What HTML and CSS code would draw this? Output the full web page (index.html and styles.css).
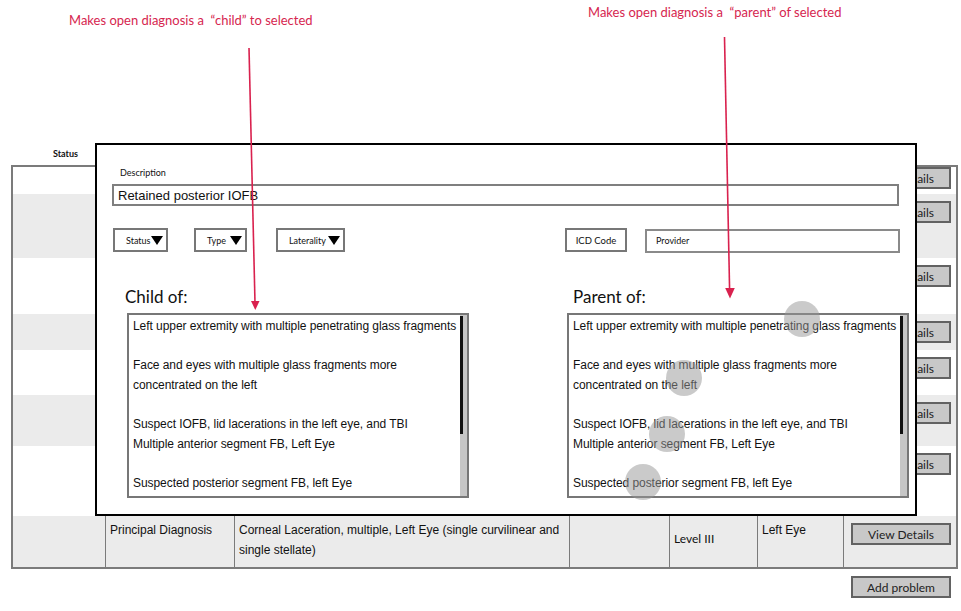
FILE: index.html
```html
<!DOCTYPE html>
<html lang="en">
<head>
    <meta charset="UTF-8">
    <meta name="viewport" content="width=device-width, initial-scale=1.0">
    <title>Problem List - Edit Diagnosis</title>
    <link rel="stylesheet" href="styles.css">
</head>
<body>
    <div class="board">
        <div class="col-label">Status</div>
        <div class="problems">
            <div class="row">
                <div class="cell"></div><div class="cell"></div><div class="cell"></div><div class="cell"></div><div class="cell"></div><div class="cell"></div>
                <div class="cell cell-action"><button class="btn">View Details</button></div>
            </div>
            <div class="row row-alt">
                <div class="cell"></div><div class="cell"></div><div class="cell"></div><div class="cell"></div><div class="cell"></div><div class="cell"></div>
                <div class="cell cell-action"><button class="btn">View Details</button></div>
            </div>
            <div class="row">
                <div class="cell"></div><div class="cell"></div><div class="cell"></div><div class="cell"></div><div class="cell"></div><div class="cell"></div>
                <div class="cell cell-action"><button class="btn">View Details</button></div>
            </div>
            <div class="row row-alt">
                <div class="cell"></div><div class="cell"></div><div class="cell"></div><div class="cell"></div><div class="cell"></div><div class="cell"></div>
                <div class="cell cell-action"><button class="btn">View Details</button></div>
            </div>
            <div class="row">
                <div class="cell"></div><div class="cell"></div><div class="cell"></div><div class="cell"></div><div class="cell"></div><div class="cell"></div>
                <div class="cell cell-action"><button class="btn">View Details</button></div>
            </div>
            <div class="row row-alt">
                <div class="cell"></div><div class="cell"></div><div class="cell"></div><div class="cell"></div><div class="cell"></div><div class="cell"></div>
                <div class="cell cell-action"><button class="btn">View Details</button></div>
            </div>
            <div class="row">
                <div class="cell"></div><div class="cell"></div><div class="cell"></div><div class="cell"></div><div class="cell"></div><div class="cell"></div>
                <div class="cell cell-action"><button class="btn">View Details</button></div>
            </div>
            <div class="row row-alt">
                <div class="cell"></div>
                <div class="cell">Principal Diagnosis</div>
                <div class="cell">Corneal Laceration, multiple, Left Eye (single curvilinear and single stellate)</div>
                <div class="cell"></div>
                <div class="cell cell-level">Level III</div>
                <div class="cell">Left Eye</div>
                <div class="cell cell-action"><button class="btn">View Details</button></div>
            </div>
        </div>
        <div class="board-actions">
            <button class="btn">Add problem</button>
        </div>
    </div>

    <div class="modal">
        <label class="field-label" for="description">Description</label>
        <input class="text-input" id="description" type="text" value="Retained posterior IOFB">

        <div class="filters">
            <div class="select select-status">Status<span class="caret"></span></div>
            <div class="select select-type">Type<span class="caret"></span></div>
            <div class="select select-laterality">Laterality<span class="caret"></span></div>
            <div class="code-box">ICD Code</div>
            <div class="provider">Provider</div>
        </div>

        <div class="relations">
            <section class="panel">
                <h2 class="panel-title">Child of:</h2>
                <div class="list">
                    <div class="list-items">
                        <p>Left upper extremity with multiple penetrating glass fragments</p>
                        <p>Face and eyes with multiple glass fragments more<br>concentrated on the left</p>
                        <p>Suspect IOFB, lid lacerations in the left eye, and TBI<br>Multiple anterior segment FB, Left Eye</p>
                        <p>Suspected posterior segment FB, left Eye</p>
                    </div>
                    <div class="scrollbar"><div class="scrollbar-thumb"></div></div>
                </div>
            </section>
            <section class="panel panel-parent">
                <h2 class="panel-title">Parent of:</h2>
                <div class="list">
                    <div class="list-items">
                        <p>Left upper extremity with multiple penetrating glass fragments</p>
                        <p>Face and eyes with multiple glass fragments more<br>concentrated on the left</p>
                        <p>Suspect IOFB, lid lacerations in the left eye, and TBI<br>Multiple anterior segment FB, Left Eye</p>
                        <p>Suspected posterior segment FB, left Eye</p>
                    </div>
                    <div class="scrollbar"><div class="scrollbar-thumb"></div></div>
                    <span class="touch touch-1"></span>
                    <span class="touch touch-2"></span>
                    <span class="touch touch-3"></span>
                    <span class="touch touch-4"></span>
                </div>
            </section>
        </div>
    </div>

    <p class="note note-child">Makes open diagnosis a&nbsp; “child” to selected</p>
    <p class="note note-parent">Makes open diagnosis a&nbsp; “parent” of selected</p>
    <svg class="arrows" width="961" height="611" viewBox="0 0 961 611">
        <line x1="249" y1="48" x2="255" y2="303" stroke="#d9214e" stroke-width="1.6"/>
        <polygon points="251,301 259.5,301 255.3,310" fill="#d9214e"/>
        <line x1="724.5" y1="37" x2="729.6" y2="290" stroke="#d9214e" stroke-width="1.6"/>
        <polygon points="725.2,288 734.8,288 730,298.5" fill="#d9214e"/>
    </svg>
</body>
</html>
```

FILE: styles.css
```css
body {
    margin: 0;
    font-family: "Liberation Sans", Arial, sans-serif;
    background: #fff;
    color: #111;
}
.board {
    width: 947px;
    margin-left: 11px;
    padding-top: 148px;
}
.col-label {
    font-family: Lato, sans-serif;
    font-size: 9px;
    font-weight: bold;
    line-height: 11px;
    margin: 0 0 6px 42px;
}
.problems {
    display: grid;
    grid-template-rows: 27px 64px 56px 36px 45px 51px 70px 51px;
    border: 2px solid #7b7b7b;
}
.row {
    display: grid;
    grid-template-columns: 92px 129px 335px 100px 88px 86px 113px;
}
.row-alt {
    background: #ebebeb;
}
.cell {
    border-left: 1px solid #7b7b7b;
    padding: 4px 5px 0 4px;
    font-size: 12px;
    line-height: 20px;
}
.cell:first-child {
    border-left: none;
}
.cell-level {
    padding-top: 13px;
    font-family: Lato, sans-serif;
}
.cell-action {
    padding: 7px 0 0 7px;
}
.row:first-child .cell-action {
    padding-top: 0;
}
.btn {
    width: 100px;
    height: 22px;
    padding: 0;
    background: #c8c8c8;
    border: 2px solid #626262;
    font-family: Lato, sans-serif;
    font-size: 12px;
    color: #222;
}
.board-actions {
    display: flex;
    justify-content: flex-end;
    padding: 7px 7px 0 0;
}

/* edit dialog laid over the list */
.modal {
    position: absolute;
    left: 95px;
    top: 143px;
    width: 822px;
    height: 373px;
    box-sizing: border-box;
    padding: 22px 16px 0 15px;
    border: 2px solid #000;
    background: #fff;
}
.field-label {
    display: block;
    font-family: Lato, sans-serif;
    font-size: 9px;
    line-height: 12px;
    margin: 0 0 5px 8px;
}
.text-input {
    display: block;
    box-sizing: border-box;
    width: 787px;
    height: 22px;
    padding: 0 4px;
    border: 2px solid #7f7f7f;
    font-family: "Liberation Sans", Arial, sans-serif;
    font-size: 13px;
    color: #111;
}
.filters {
    display: flex;
    align-items: center;
    margin-top: 22px;
    height: 24px;
    font-family: Lato, sans-serif;
    font-size: 9px;
}
.select {
    display: flex;
    align-items: center;
    box-sizing: border-box;
    height: 24px;
    margin-left: 1px;
    padding: 0 3px 0 11px;
    border: 2px solid #777;
}
.select-status {
    width: 55px;
}
.select-type {
    width: 53px;
    margin-left: 26px;
}
.select-laterality {
    width: 69px;
    margin-left: 29px;
}
.caret {
    margin-left: auto;
    width: 0;
    height: 0;
    border-left: 6px solid transparent;
    border-right: 6px solid transparent;
    border-top: 9px solid #000;
}
.code-box {
    display: flex;
    align-items: center;
    justify-content: center;
    box-sizing: border-box;
    width: 62px;
    height: 24px;
    margin-left: auto;
    border: 2px solid #777;
    font-size: 9.5px;
}
.provider {
    display: flex;
    align-items: center;
    box-sizing: border-box;
    width: 255px;
    height: 24px;
    margin: 1px -1px 0 18px;
    padding-left: 9px;
    border: 2px solid #8a8a8a;
}
.relations {
    display: grid;
    grid-template-columns: 342px 342px;
    column-gap: 98px;
    padding-left: 15px;
}
.panel-title {
    margin: 35px 0 6px -2px;
    font-family: Lato, sans-serif;
    font-size: 17px;
    font-weight: normal;
    line-height: 20px;
    color: #111;
}
.panel-parent .panel-title {
    margin-left: 6px;
}
.list {
    position: relative;
    display: flex;
    box-sizing: border-box;
    height: 185px;
    border: 2px solid #777;
}
.list-items {
    flex: 1;
    padding: 2px 0 0 4px;
    font-size: 12px;
    line-height: 19.6px;
    letter-spacing: -0.06px;
    white-space: nowrap;
}
.list-items p {
    margin: 0 0 19.6px;
}
.scrollbar {
    width: 7px;
    background: #c6c6c6;
}
.scrollbar-thumb {
    width: 3px;
    height: 118px;
    margin-top: 1px;
    background: #111;
}
.touch {
    position: absolute;
    width: 36px;
    height: 36px;
    border-radius: 50%;
    background: rgba(150, 150, 150, 0.5);
}
.touch-1 { left: 215px; top: -14px; }
.touch-2 { left: 97px; top: 45px; }
.touch-3 { left: 80px; top: 101px; }
.touch-4 { left: 56px; top: 149px; }

/* red annotations */
.note {
    position: absolute;
    margin: 0;
    font-family: Lato, sans-serif;
    font-size: 13px;
    line-height: 15px;
    color: #d6264f;
}
.note-child {
    left: 69px;
    top: 13px;
}
.note-parent {
    left: 588px;
    top: 5px;
}
.arrows {
    position: absolute;
    left: 0;
    top: 0;
    pointer-events: none;
}
```
